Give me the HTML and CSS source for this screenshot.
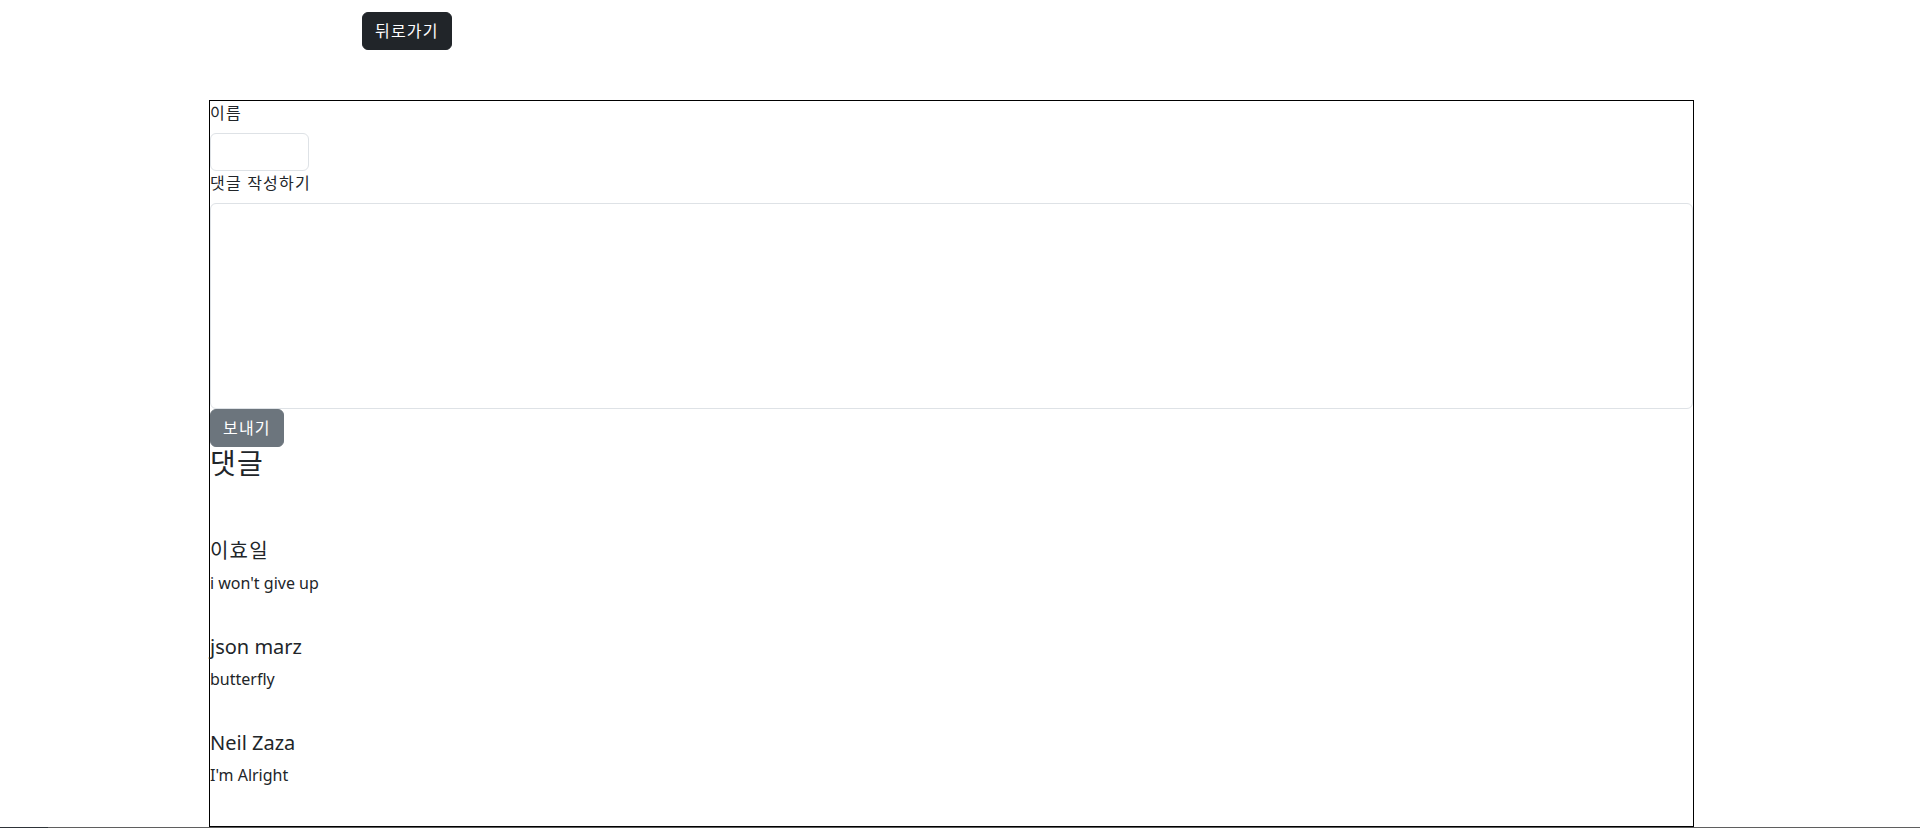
FILE: index.html
```html
<!DOCTYPE html>
<html lang="ko">
<head>
<meta charset="utf-8">
<title>댓글</title>
<link rel="stylesheet" href="styles.css">
</head>
<body>
<div class="top">
  <button class="btn btn-dark ko" type="button">뒤로가기</button>
</div>
<div class="board">
  <form class="write">
    <label class="form-label ko" for="name">이름</label>
    <input class="form-control name-input" id="name" type="text">
    <label class="form-label ko" for="content">댓글 작성하기</label>
    <textarea class="form-control content-input" id="content"></textarea>
    <button class="btn btn-secondary ko" type="button">보내기</button>
  </form>
  <h3 class="title ko">댓글</h3>
  <div class="comments">
    <div class="comment">
      <h5 class="author ko">이효일</h5>
      <p class="text">i won't give up</p>
    </div>
    <div class="comment">
      <h5 class="author">json marz</h5>
      <p class="text">butterfly</p>
    </div>
    <div class="comment">
      <h5 class="author">Neil Zaza</h5>
      <p class="text">I'm Alright</p>
    </div>
  </div>
</div>
<div class="bottom-line"><span class="bottom-left"></span></div>
</body>
</html>
```
FILE: styles.css
```css
* { box-sizing: border-box; }
html, body { margin: 0; padding: 0; }
body {
  font-family: "Noto Sans", "Noto Sans CJK KR", sans-serif;
  font-size: 16px;
  line-height: 1.5;
  color: #212529;
  background: #fff;
  overflow: hidden;
}
.ko { letter-spacing: 1.2px; }
.top {
  padding: 12px 0 0 362px;
  height: 100px;
}
.btn {
  display: inline-block;
  font-family: inherit;
  font-size: 16px;
  line-height: 24px;
  padding: 6px 12px;
  border: 1px solid transparent;
  border-radius: 6px;
  color: #fff;
  cursor: pointer;
}
.btn-dark { background: #212529; border-color: #212529; }
.btn-secondary { background: #6c757d; border-color: #6c757d; }
.board {
  margin-left: 209px;
  width: 1485px;
  border: 1px solid #000;
  padding-bottom: 23px;
}
.write { display: flex; flex-direction: column; align-items: flex-start; }
.form-label { display: block; margin-bottom: 8px; line-height: 24px; }
.form-control {
  display: block;
  font-family: inherit;
  font-size: 16px;
  line-height: 24px;
  padding: 6px 12px;
  border: 1px solid #dee2e6;
  border-radius: 6px;
  background: #fff;
  color: #212529;
}
.name-input { width: 99px; height: 38px; }
.content-input { width: 100%; height: 206px; resize: none; margin: 0; }
.title {
  margin: 0 0 8px;
  font-size: 28px;
  font-weight: 400;
  line-height: 1.2;
}
.comments { margin-top: 58px; }
.comment + .comment { margin-top: 40px; }
.author {
  margin: 0 0 8px;
  font-size: 20px;
  font-weight: 400;
  line-height: 24px;
}
.text { margin: 0 0 16px; line-height: 24px; }
.bottom-line {
  height: 1px;
  background: #5f5f5f;
  display: flex;
}
.bottom-left { width: 48px; background: #2e3338; }
```
